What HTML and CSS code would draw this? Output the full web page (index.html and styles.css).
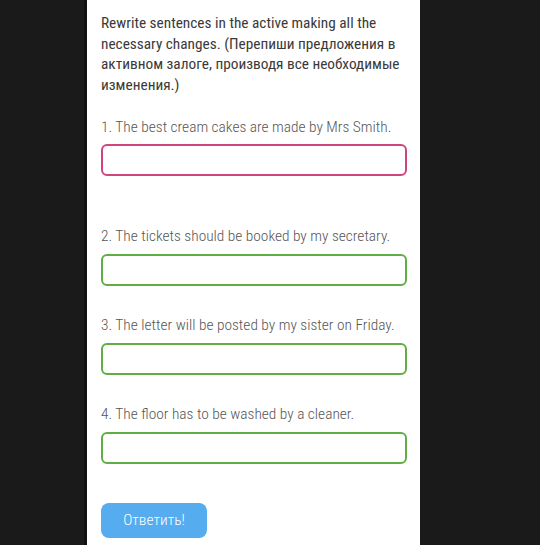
FILE: index.html
```html
<!DOCTYPE html>
<html>
<head>
<meta charset="utf-8">
<link rel="stylesheet" href="styles.css">
</head>
<body>
<div class="page">
  <div class="edge-left"></div>
  <main class="card">
    <p class="intro">Rewrite sentences in the active making all the necessary changes. (Перепиши предложения в активном залоге, производя все необходимые изменения.)</p>
    <div class="item first">
      <p class="label">1. The best cream cakes are made by Mrs Smith.</p>
      <div class="field pink"></div>
    </div>
    <div class="item">
      <p class="label">2. The tickets should be booked by my secretary.</p>
      <div class="field green"></div>
    </div>
    <div class="item">
      <p class="label">3. The letter will be posted by my sister on Friday.</p>
      <div class="field green"></div>
    </div>
    <div class="item">
      <p class="label">4. The floor has to be washed by a cleaner.</p>
      <div class="field green"></div>
    </div>
    <button class="btn">Ответить!</button>
  </main>
  <div class="edge-right"></div>
</div>
</body>
</html>
```
FILE: styles.css
```css
html, body {
  margin: 0;
  padding: 0;
  background: #1a1a1a;
}
.page {
  display: flex;
  width: 540px;
  height: 545px;
  overflow: hidden;
  font-family: "Roboto Condensed", "Liberation Sans Narrow", Roboto, sans-serif;
}
.edge-left {
  width: 84px;
  border-right: 3px solid #111;
  background: #1a1a1a;
}
.card {
  width: 333px;
  background: #fff;
  padding: 13px 14px 0 14px;
  box-sizing: border-box;
}
.edge-right {
  flex: 1;
  background: #1a1a1a;
}
.intro {
  margin: 0 0 21px 0;
  font-size: 15.3px;
  line-height: 20.7px;
  color: #3a3a3a;
}
.label {
  margin: 0;
  font-size: 15.4px;
  font-weight: 300;
  line-height: 20px;
  color: #555;
  white-space: nowrap;
}
.item {
  margin-bottom: 29.5px;
}
.item.first {
  margin-bottom: 50px;
}
.field {
  margin-top: 7.5px;
  width: 306px;
  height: 32px;
  box-sizing: border-box;
  border: 2px solid;
  border-radius: 6px;
}
.pink { border-color: #d1457f; }
.green { border-color: #5fae45; }
.btn {
  margin-top: 9.5px;
  width: 106px;
  height: 35px;
  border: none;
  border-radius: 8px;
  background: #55acee;
  color: #fff;
  font-family: inherit;
  font-size: 15.5px;
  font-weight: 300;
  padding: 0;
}
```
